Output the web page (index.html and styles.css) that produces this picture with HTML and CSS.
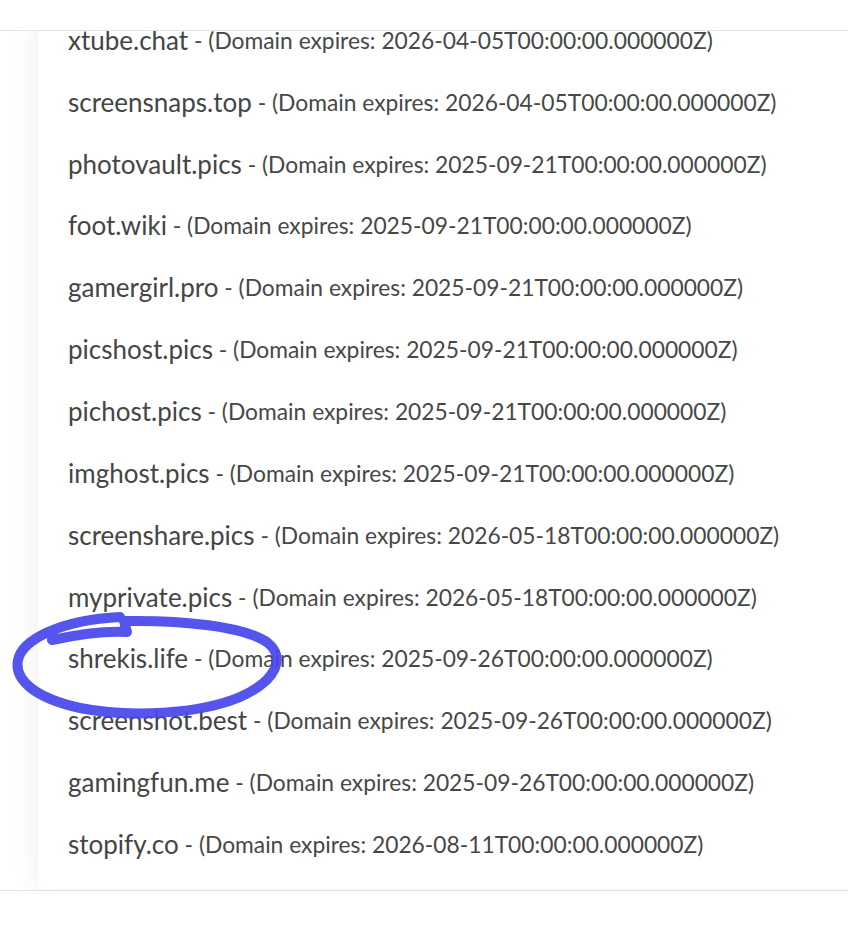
FILE: index.html
```html
<!DOCTYPE html>
<html lang="en">
<head>
<meta charset="utf-8">
<title>Domains</title>
<link rel="stylesheet" href="styles.css">
</head>
<body>
<div class="page">
  <header class="topbar"></header>
  <main class="main">
    <section class="card">
      <ul class="domains">
        <li class="row"><span class="name">xtube.chat</span><span class="meta"> - (Domain expires: 2026-04-05T00:00:00.000000Z)</span></li>
        <li class="row"><span class="name">screensnaps.top</span><span class="meta"> - (Domain expires: 2026-04-05T00:00:00.000000Z)</span></li>
        <li class="row"><span class="name">photovault.pics</span><span class="meta"> - (Domain expires: 2025-09-21T00:00:00.000000Z)</span></li>
        <li class="row"><span class="name">foot.wiki</span><span class="meta"> - (Domain expires: 2025-09-21T00:00:00.000000Z)</span></li>
        <li class="row"><span class="name">gamergirl.pro</span><span class="meta"> - (Domain expires: 2025-09-21T00:00:00.000000Z)</span></li>
        <li class="row"><span class="name">picshost.pics</span><span class="meta"> - (Domain expires: 2025-09-21T00:00:00.000000Z)</span></li>
        <li class="row"><span class="name">pichost.pics</span><span class="meta"> - (Domain expires: 2025-09-21T00:00:00.000000Z)</span></li>
        <li class="row"><span class="name">imghost.pics</span><span class="meta"> - (Domain expires: 2025-09-21T00:00:00.000000Z)</span></li>
        <li class="row"><span class="name">screenshare.pics</span><span class="meta"> - (Domain expires: 2026-05-18T00:00:00.000000Z)</span></li>
        <li class="row"><span class="name">myprivate.pics</span><span class="meta"> - (Domain expires: 2026-05-18T00:00:00.000000Z)</span></li>
        <li class="row"><span class="name">shrekis.life</span><span class="meta"> - (Domain expires: 2025-09-26T00:00:00.000000Z)</span></li>
        <li class="row"><span class="name">screenshot.best</span><span class="meta"> - (Domain expires: 2025-09-26T00:00:00.000000Z)</span></li>
        <li class="row"><span class="name">gamingfun.me</span><span class="meta"> - (Domain expires: 2025-09-26T00:00:00.000000Z)</span></li>
        <li class="row"><span class="name">stopify.co</span><span class="meta"> - (Domain expires: 2026-08-11T00:00:00.000000Z)</span></li>
      </ul>
    </section>
  </main>
  <footer class="footer"></footer>
  <svg class="scribble" width="848" height="926" viewBox="0 0 848 926" aria-hidden="true">
    <path d="M 52 640 C 80 634, 108 631, 127 632 L 124 621 C 180 620, 245 626, 268 643 C 285 657, 278 680, 240 697 C 200 714, 130 718, 80 708 C 35 698, 14 680, 18 660 C 22 640, 60 620, 120 617" />
  </svg>
</div>
</body>
</html>
```

FILE: styles.css
```css
html, body {
  margin: 0;
  padding: 0;
  background: #ffffff;
  overflow: hidden;
}

body {
  font-family: Lato, "Open Sans", "Liberation Sans", sans-serif;
  color: #474747;
}

.page {
  position: relative;
  width: 848px;
  height: 926px;
  display: flex;
  flex-direction: column;
  overflow: hidden;
}

.topbar {
  height: 30px;
  flex: none;
  background: #ffffff;
  border-bottom: 1px solid #e4e4e4;
  position: relative;
  z-index: 2;
}

.main {
  flex: none;
  padding-left: 38px;
  padding-bottom: 1px;
}

.card {
  margin-top: -22px;
  margin-right: -30px;
  background: #ffffff;
  border-radius: 8px;
  box-shadow: 0 0 30px rgba(0, 0, 0, 0.07);
  padding: 0 0 14px 30px;
}

.domains {
  list-style: none;
  margin: 0;
  padding: 0;
}

.row {
  height: 61.85px;
  display: flex;
  align-items: center;
  white-space: nowrap;
}

.name {
  font-size: 26px;
  color: #454545;
}

.meta {
  font-size: 22.8px;
  color: #474747;
  white-space: pre;
}

.footer {
  flex: 1;
  background: #ffffff;
  border-top: 1px solid #e4e4e4;
  position: relative;
  z-index: 2;
}

.scribble {
  position: absolute;
  left: 0;
  top: 0;
  pointer-events: none;
  z-index: 3;
}

.scribble path {
  fill: none;
  stroke: #4747ec;
  stroke-opacity: 0.92;
  stroke-width: 10;
  stroke-linecap: round;
  stroke-linejoin: round;
}
```
